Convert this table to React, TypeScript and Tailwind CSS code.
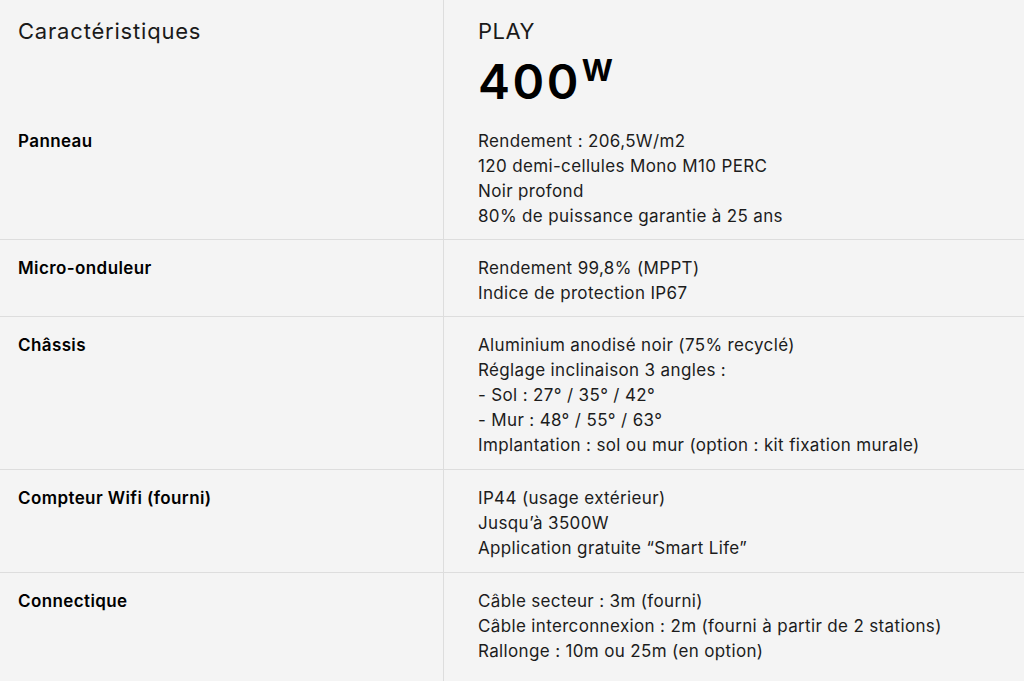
const rows: { label: string; lines: string[] }[] = [
  {
    label: "Micro-onduleur",
    lines: ["Rendement 99,8% (MPPT)", "Indice de protection IP67"],
  },
  {
    label: "Châssis",
    lines: [
      "Aluminium anodisé noir (75% recyclé)",
      "Réglage inclinaison 3 angles :",
      "- Sol : 27° / 35° / 42°",
      "- Mur : 48° / 55° / 63°",
      "Implantation : sol ou mur (option : kit fixation murale)",
    ],
  },
  {
    label: "Compteur Wifi (fourni)",
    lines: ["IP44 (usage extérieur)", "Jusqu’à 3500W", "Application gratuite “Smart Life”"],
  },
  {
    label: "Connectique",
    lines: [
      "Câble secteur : 3m (fourni)",
      "Câble interconnexion : 2m (fourni à partir de 2 stations)",
      "Rallonge : 10m ou 25m (en option)",
    ],
  },
];

const panneau = [
  "Rendement : 206,5W/m2",
  "120 demi-cellules Mono M10 PERC",
  "Noir profond",
  "80% de puissance garantie à 25 ans",
];

function SpecRow({
  label,
  lines,
  last,
  loose,
}: {
  label: string;
  lines: string[];
  last?: boolean;
  loose?: boolean;
}) {
  const pad = loose ? "pt-[16px] pb-[11px]" : "pt-[16px] pb-[10px]";
  return (
    <div className={`grid grid-cols-[443px_1fr] ${last ? "" : "border-b border-[#dddddd]"}`}>
      <div className={`pl-[18px] ${pad} text-[17px] leading-[25px] tracking-[0.4px] font-semibold text-black`}>
        {label}
      </div>
      <div className={`border-l border-[#dddddd] pl-[34px] ${pad} text-[17px] leading-[25px] tracking-[0.35px] text-[#1c1c1c]`}>
        {lines.map((l) => (
          <div key={l}>{l}</div>
        ))}
      </div>
    </div>
  );
}

export default function App() {
  return (
    <div className="h-[681px] w-[1024px] bg-[#f4f4f4] font-['Inter','Liberation_Sans',sans-serif] overflow-hidden">
      {/* header */}
      <div className="grid grid-cols-[443px_1fr]">
        <div className="pl-[18px] pt-[16px] text-[22px] leading-[30px] tracking-[0.8px] text-[#1a1a1a]">
          Caractéristiques
        </div>
        <div className="border-l border-[#dddddd] pl-[34px] pt-[16px] pb-[7px]">
          <div className="text-[22px] leading-[30px] tracking-[0.5px] text-[#1a1a1a]">PLAY</div>
          <div className="mt-[12px] flex items-start text-black font-semibold">
            <span className="text-[48px] leading-[48px] tracking-[2.5px]">400</span>
            <span className="text-[30px] leading-[30px] -mt-[3px] ml-[1px] font-bold">W</span>
          </div>
        </div>
      </div>
      <SpecRow label="Panneau" lines={panneau} />
      {rows.map((r, i) => (
        <SpecRow
          key={r.label}
          label={r.label}
          lines={r.lines}
          loose={i > 0}
          last={i === rows.length - 1}
        />
      ))}
      <div className="grid grid-cols-[443px_1fr] h-[40px]">
        <div />
        <div className="border-l border-[#dddddd]" />
      </div>
    </div>
  );
}
